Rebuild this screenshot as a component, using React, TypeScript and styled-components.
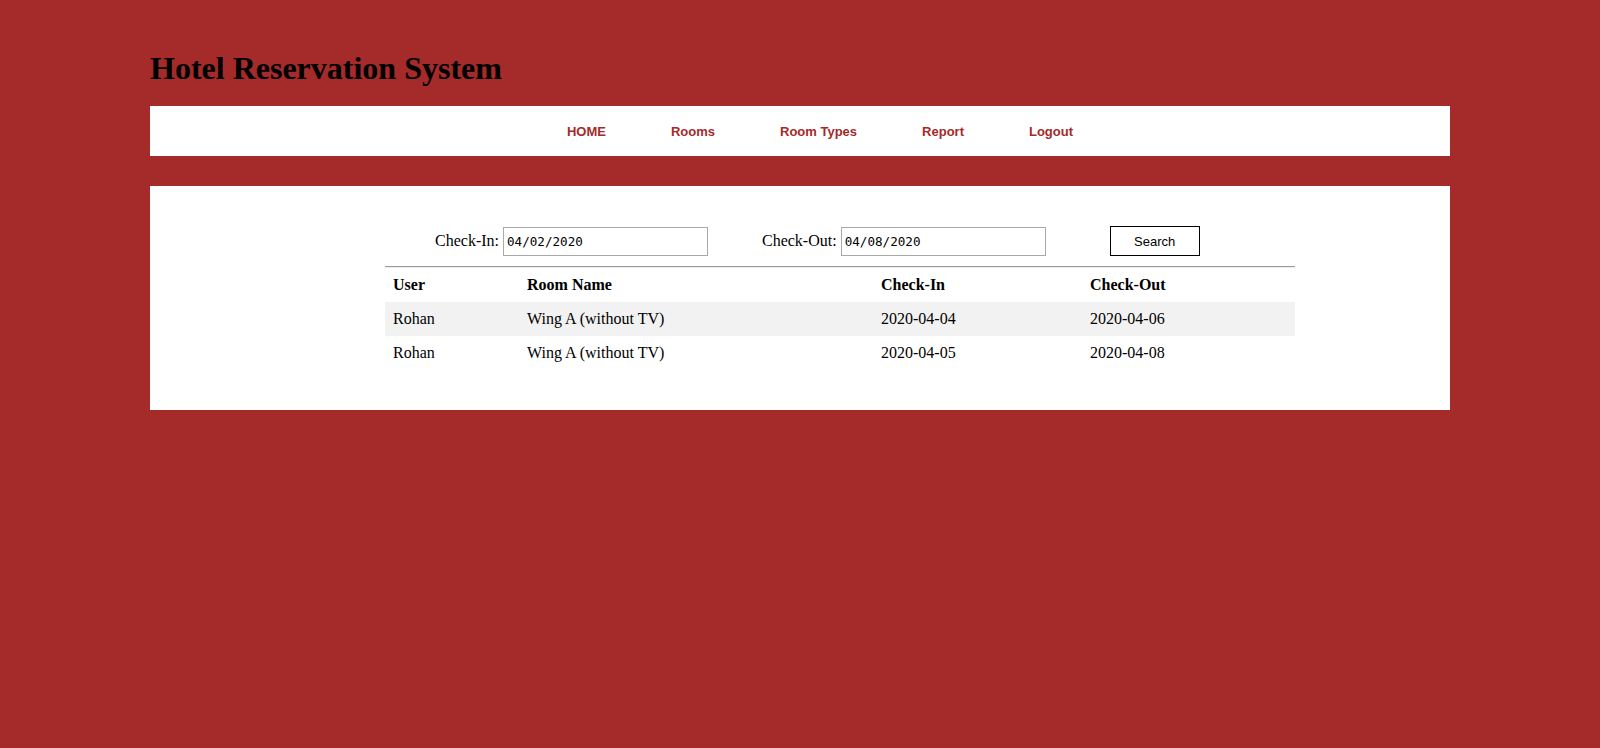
import React from "react";
import styled, { createGlobalStyle } from "styled-components";

const GlobalStyle = createGlobalStyle`
  html, body {
    margin: 0;
    padding: 0;
    background: #a52a2a;
    min-height: 100%;
  }
  body {
    font-family: "Liberation Serif", "Times New Roman", serif;
    font-size: 16px;
    color: #000;
  }
`;

const Page = styled.div`
  width: 1300px;
  margin: 0 auto;
  padding-top: 50px;
`;

const Title = styled.h1`
  margin: 0 0 20px 0;
  font-family: "Liberation Serif", "Times New Roman", serif;
  font-size: 32px;
  line-height: 36px;
  font-weight: bold;
  color: #000;
`;

const NavBar = styled.nav`
  box-sizing: border-box;
  height: 50px;
  background: #fff;
  display: flex;
  align-items: center;
  justify-content: center;
  gap: 65px;
  padding-left: 40px;
`;

const NavLink = styled.a`
  font-family: "Liberation Sans", Arial, sans-serif;
  font-size: 13px;
  font-weight: bold;
  color: #a52a2a;
  text-decoration: none;
  cursor: pointer;
`;

const Main = styled.main`
  margin-top: 30px;
  background: #fff;
  padding: 40px 155px 40px 235px;
`;

const SearchRow = styled.form`
  display: flex;
  align-items: center;
  height: 30px;
  padding-left: 50px;
`;

const Field = styled.label<{ $offset?: number }>`
  display: flex;
  align-items: center;
  gap: 4px;
  margin-left: ${(p) => p.$offset ?? 0}px;
  font-size: 16px;
  line-height: 18px;
`;

const DateInput = styled.input`
  box-sizing: border-box;
  width: 205px;
  height: 29px;
  border: 1px solid #a9a9a9;
  padding: 0 3px;
  font-family: "DejaVu Sans Mono", "Liberation Mono", monospace;
  font-size: 12.6px;
  color: #000;
  background: #fff;
  outline: none;
`;

const SearchButton = styled.button`
  box-sizing: border-box;
  margin-left: 64px;
  width: 90px;
  height: 30px;
  border: 1px solid #000;
  background: #fff;
  font-family: "Liberation Sans", Arial, sans-serif;
  font-size: 13px;
  color: #000;
  padding: 0;
  cursor: pointer;
`;

const Rule = styled.hr`
  margin: 10px 0 0 0;
  height: 0;
  border: none;
  border-top: 1px solid #9a9a9a;
  border-bottom: 1px solid #eeeeee;
`;

const Table = styled.table`
  width: 910px;
  border-collapse: collapse;
  table-layout: fixed;
`;

const HeadCell = styled.th<{ $w: number }>`
  box-sizing: border-box;
  width: ${(p) => p.$w}px;
  text-align: left;
  font-weight: bold;
  padding: 8px;
  line-height: 18px;
  font-size: 16px;
`;

const Row = styled.tr<{ $striped?: boolean }>`
  background: ${(p) => (p.$striped ? "#f2f2f2" : "#fff")};
`;

const Cell = styled.td`
  padding: 8px;
  line-height: 18px;
  font-size: 16px;
`;

const columns = [
  { label: "User", w: 134 },
  { label: "Room Name", w: 354 },
  { label: "Check-In", w: 209 },
  { label: "Check-Out", w: 213 },
];

const bookings = [
  { user: "Rohan", room: "Wing A (without TV)", in: "2020-04-04", out: "2020-04-06" },
  { user: "Rohan", room: "Wing A (without TV)", in: "2020-04-05", out: "2020-04-08" },
];

export default function App() {
  return (
    <>
      <GlobalStyle />
      <Page>
        <Title>Hotel Reservation System</Title>
        <NavBar>
          <NavLink>HOME</NavLink>
          <NavLink>Rooms</NavLink>
          <NavLink>Room Types</NavLink>
          <NavLink>Report</NavLink>
          <NavLink>Logout</NavLink>
        </NavBar>
        <Main>
          <SearchRow onSubmit={(e) => e.preventDefault()}>
            <Field>
              Check-In:
              <DateInput type="text" readOnly value="04/02/2020" />
            </Field>
            <Field $offset={54}>
              Check-Out:
              <DateInput type="text" readOnly value="04/08/2020" />
            </Field>
            <SearchButton type="submit">Search</SearchButton>
          </SearchRow>
          <Rule />
          <Table>
            <thead>
              <tr>
                {columns.map((c) => (
                  <HeadCell key={c.label} $w={c.w}>
                    {c.label}
                  </HeadCell>
                ))}
              </tr>
            </thead>
            <tbody>
              {bookings.map((b, i) => (
                <Row key={i} $striped={i % 2 === 0}>
                  <Cell>{b.user}</Cell>
                  <Cell>{b.room}</Cell>
                  <Cell>{b.in}</Cell>
                  <Cell>{b.out}</Cell>
                </Row>
              ))}
            </tbody>
          </Table>
        </Main>
      </Page>
    </>
  );
}
